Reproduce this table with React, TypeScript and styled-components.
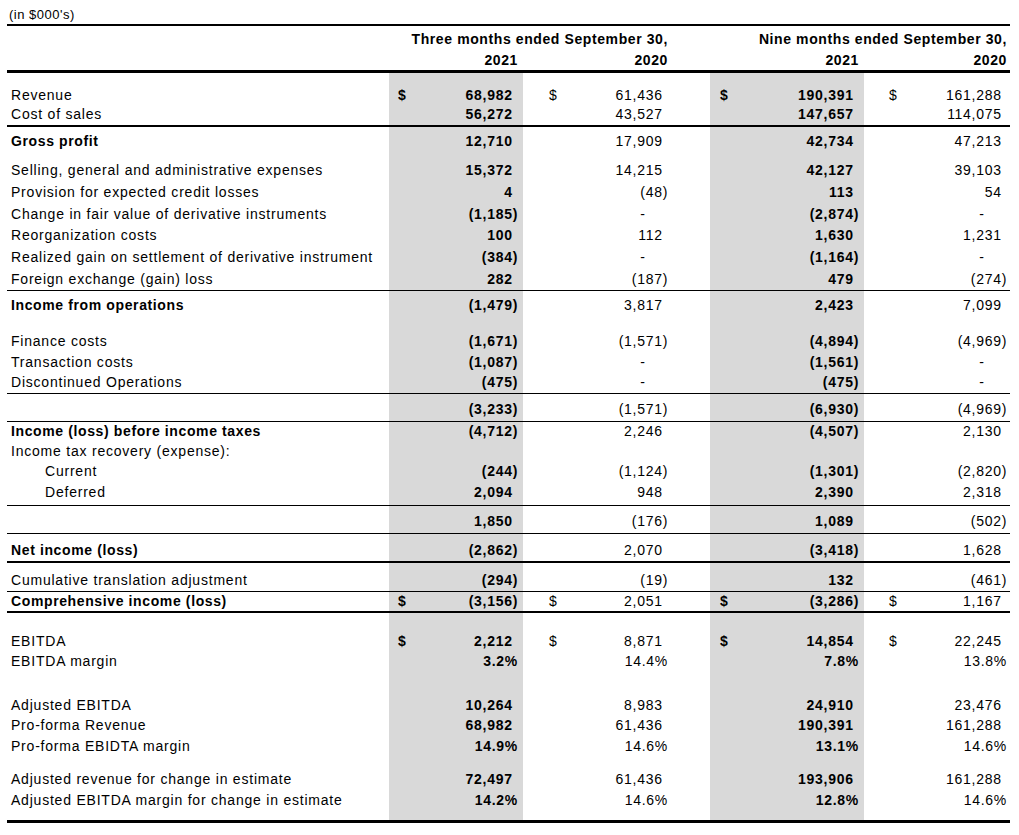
import React from "react";
import styled, { createGlobalStyle } from "styled-components";

const Global = createGlobalStyle`
  html, body { margin: 0; padding: 0; background: #ffffff; }
  body {
    font-family: "Liberation Sans", Arial, sans-serif;
    color: #000000;
    -webkit-font-smoothing: antialiased;
  }
`;

const COLS = "382px 134px 149px 38px 154px 146px";
const SHADE = "#d9d9d9";

const Sheet = styled.div`
  width: 1003px;
  margin-left: 7px;
  font-size: 14px;
  line-height: 18px;
  letter-spacing: 0.7px;
`;

const Caption = styled.div`
  box-sizing: content-box;
  height: 18px;
  padding: 6px 0 0 2px;
  font-size: 13px;
  letter-spacing: 0.5px;
  border-bottom: 2px solid #000;
`;

const HeadRow = styled.div<{ $h: number; $pt: number; $rule?: number }>`
  display: grid;
  grid-template-columns: ${COLS};
  height: ${(p) => p.$h}px;
  border-bottom: ${(p) => (p.$rule ? `${p.$rule}px solid #000` : "none")};
  font-weight: bold;
  letter-spacing: 0.6px;
  --pt: ${(p) => p.$pt}px;
`;

const HeadCell = styled.div<{ $span?: string; $pr: number }>`
  grid-column: ${(p) => p.$span || "auto"};
  text-align: right;
  padding-top: var(--pt);
  padding-right: ${(p) => p.$pr}px;
  white-space: nowrap;
`;

const Row = styled.div<{ $h: number; $pt: number; $rule?: number }>`
  display: grid;
  grid-template-columns: ${COLS};
  height: ${(p) => p.$h}px;
  border-bottom: ${(p) => (p.$rule ? `${p.$rule}px solid #000` : "none")};
  --pt: ${(p) => p.$pt}px;
`;

const Label = styled.div<{ $bold?: boolean; $indent?: boolean }>`
  padding-top: var(--pt);
  padding-left: ${(p) => (p.$indent ? 38 : 4)}px;
  font-weight: ${(p) => (p.$bold ? "bold" : "normal")};
  letter-spacing: ${(p) => (p.$bold ? 0.62 : 0.78)}px;
  white-space: nowrap;
`;

const Gap = styled.div``;

const Amount = styled.div<{ $shade?: boolean; $pl: number; $pr: number }>`
  display: flex;
  justify-content: space-between;
  background: ${(p) => (p.$shade ? SHADE : "transparent")};
  padding: var(--pt) ${(p) => p.$pr}px 0 ${(p) => p.$pl}px;
  font-weight: ${(p) => (p.$shade ? "bold" : "normal")};
  white-space: nowrap;
`;

const Ghost = styled.span`
  visibility: hidden;
`;

type Line = {
  label: string;
  v?: string[];
  h: number;
  pt: number;
  rule?: number;
  bold?: boolean;
  indent?: boolean;
  dollar?: boolean;
};

const lines: Line[] = [
  { label: "Revenue", v: ["68,982", "61,436", "190,391", "161,288"], h: 31, pt: 13, dollar: true },
  { label: "Cost of sales", v: ["56,272", "43,527", "147,657", "114,075"], h: 21, pt: 1, rule: 2 },
  { label: "Gross profit", v: ["12,710", "17,909", "42,734", "47,213"], h: 33, pt: 5, bold: true },
  { label: "Selling, general and administrative expenses", v: ["15,372", "14,215", "42,127", "39,103"], h: 22, pt: 1 },
  { label: "Provision for expected credit losses", v: ["4", "(48)", "113", "54"], h: 22, pt: 1 },
  { label: "Change in fair value of derivative instruments", v: ["(1,185)", "-", "(2,874)", "-"], h: 21, pt: 1 },
  { label: "Reorganization costs", v: ["100", "112", "1,630", "1,231"], h: 22, pt: 1 },
  { label: "Realized gain on settlement of derivative instrument", v: ["(384)", "-", "(1,164)", "-"], h: 22, pt: 1 },
  { label: "Foreign exchange (gain) loss", v: ["282", "(187)", "479", "(274)"], h: 21, pt: 1, rule: 1 },
  { label: "Income from operations", v: ["(1,479)", "3,817", "2,423", "7,099"], h: 40, pt: 5, bold: true },
  { label: "Finance costs", v: ["(1,671)", "(1,571)", "(4,894)", "(4,969)"], h: 21, pt: 1 },
  { label: "Transaction costs", v: ["(1,087)", "-", "(1,561)", "-"], h: 20, pt: 1 },
  { label: "Discontinued Operations", v: ["(475)", "-", "(475)", "-"], h: 21, pt: 1, rule: 1 },
  { label: "", v: ["(3,233)", "(1,571)", "(6,930)", "(4,969)"], h: 27, pt: 6, rule: 1 },
  { label: "Income (loss) before income taxes", v: ["(4,712)", "2,246", "(4,507)", "2,130"], h: 20, pt: 0, bold: true },
  { label: "Income tax recovery (expense):", h: 20, pt: 0 },
  { label: "Current", v: ["(244)", "(1,124)", "(1,301)", "(2,820)"], h: 20, pt: 0, indent: true },
  { label: "Deferred", v: ["2,094", "948", "2,390", "2,318"], h: 23, pt: 1, indent: true, rule: 1 },
  { label: "", v: ["1,850", "(176)", "1,089", "(502)"], h: 27, pt: 6, rule: 1 },
  { label: "Net income (loss)", v: ["(2,862)", "2,070", "(3,418)", "1,628"], h: 27, pt: 7, bold: true, rule: 2 },
  { label: "Cumulative translation adjustment", v: ["(294)", "(19)", "132", "(461)"], h: 28, pt: 8, rule: 1 },
  { label: "Comprehensive income (loss)", v: ["(3,156)", "2,051", "(3,286)", "1,167"], h: 19, pt: 0, bold: true, rule: 2, dollar: true },
  { label: "EBITDA", v: ["2,212", "8,871", "14,854", "22,245"], h: 38, pt: 19, dollar: true },
  { label: "EBITDA margin", v: ["3.2%", "14.4%", "7.8%", "13.8%"], h: 44, pt: 1 },
  { label: "Adjusted EBITDA", v: ["10,264", "8,983", "24,910", "23,476"], h: 20, pt: 1 },
  { label: "Pro-forma Revenue", v: ["68,982", "61,436", "190,391", "161,288"], h: 21, pt: 1 },
  { label: "Pro-forma EBIDTA margin", v: ["14.9%", "14.6%", "13.1%", "14.6%"], h: 32, pt: 1 },
  { label: "Adjusted revenue for change in estimate", v: ["72,497", "61,436", "193,906", "161,288"], h: 21, pt: 2 },
  { label: "Adjusted EBITDA margin for change in estimate", v: ["14.2%", "14.6%", "12.8%", "14.6%"], h: 31, pt: 2, rule: 3 },
];

const colSpec = [
  { shade: true, pl: 9, pr: 5 },
  { shade: false, pl: 26, pr: 4 },
  { shade: true, pl: 10, pr: 5 },
  { shade: false, pl: 25, pr: 3 },
];

function Figure({ value }: { value?: string }) {
  if (!value) return <span />;
  if (value === "-")
    return (
      <span>
        -<Ghost>00)</Ghost>
      </span>
    );
  if (value.startsWith("(") || value.endsWith("%")) return <span>{value}</span>;
  return (
    <span>
      {value}
      <Ghost>)</Ghost>
    </span>
  );
}

function AmountCell({ i, value, dollar }: { i: number; value?: string; dollar?: boolean }) {
  const c = colSpec[i];
  return (
    <Amount $shade={c.shade} $pl={c.pl} $pr={c.pr}>
      <span>{dollar ? "$" : ""}</span>
      <Figure value={value} />
    </Amount>
  );
}

export default function App() {
  return (
    <>
      <Global />
      <Sheet>
        <Caption>(in $000's)</Caption>
        <HeadRow $h={23} $pt={4}>
          <Gap />
          <HeadCell $span="2 / 4" $pr={4}>
            Three months ended September 30,
          </HeadCell>
          <Gap />
          <HeadCell $span="5 / 7" $pr={3}>
            Nine months ended September 30,
          </HeadCell>
        </HeadRow>
        <HeadRow $h={21} $pt={2} $rule={3}>
          <Gap />
          <HeadCell $pr={5}>2021</HeadCell>
          <HeadCell $pr={4}>2020</HeadCell>
          <Gap />
          <HeadCell $pr={5}>2021</HeadCell>
          <HeadCell $pr={3}>2020</HeadCell>
        </HeadRow>
        {lines.map((l, idx) => (
          <Row key={idx} $h={l.h} $pt={l.pt} $rule={l.rule}>
            <Label $bold={l.bold} $indent={l.indent}>
              {l.label}
            </Label>
            <AmountCell i={0} value={l.v?.[0]} dollar={l.dollar} />
            <AmountCell i={1} value={l.v?.[1]} dollar={l.dollar} />
            <Gap />
            <AmountCell i={2} value={l.v?.[2]} dollar={l.dollar} />
            <AmountCell i={3} value={l.v?.[3]} dollar={l.dollar} />
          </Row>
        ))}
      </Sheet>
    </>
  );
}
